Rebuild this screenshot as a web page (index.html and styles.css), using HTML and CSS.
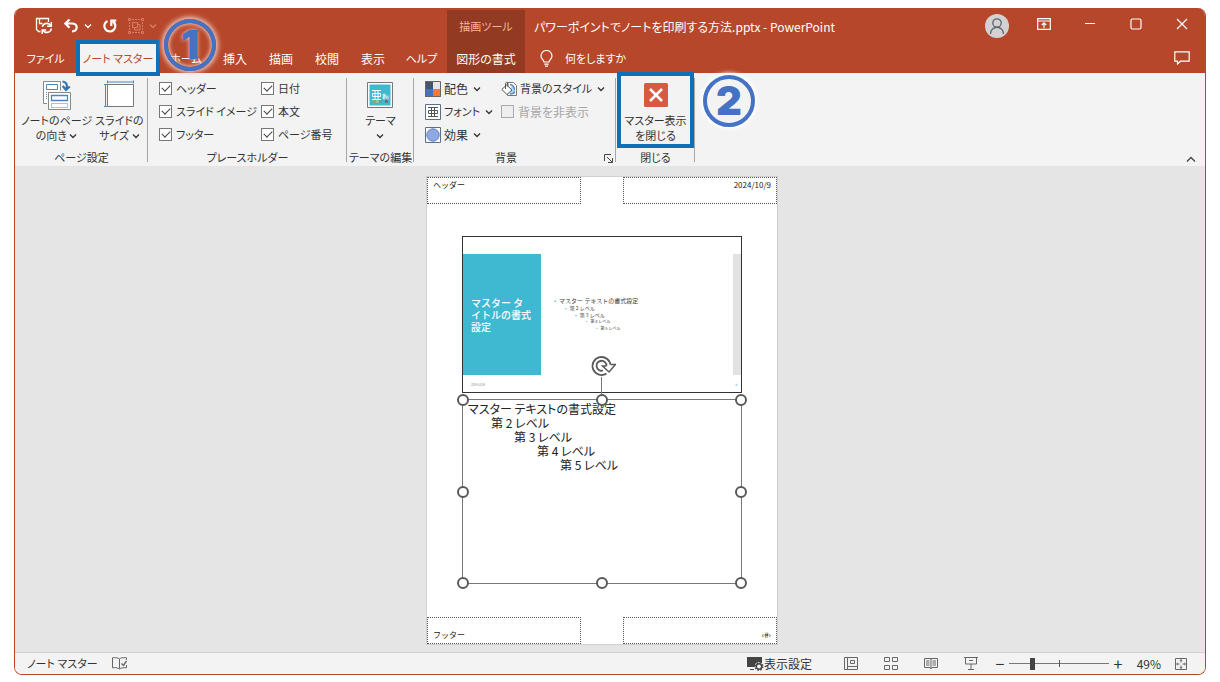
FILE: index.html
```html
<!DOCTYPE html>
<html lang="ja">
<head>
<meta charset="utf-8">
<title>パワーポイントでノートを印刷する方法.pptx - PowerPoint</title>
<link rel="stylesheet" href="styles.css">
</head>
<body>
<svg class="defs" width="0" height="0" aria-hidden="true">
  <symbol id="chev" viewBox="0 0 8 6"><path d="M1 1.5 4 4.5 7 1.5" fill="none" stroke="currentColor" stroke-width="1.3"/></symbol>
</svg>
<div class="window">
  <header class="titlebar">
    <div class="quick">
      <button class="icon-btn" aria-label="保存">
        <svg width="18" height="18" viewBox="0 0 18 18" fill="none" stroke="currentColor" stroke-width="1.3"><path d="M5.500 14.500H3.500L1.500 12.500V1.500h12v3.500M4.500 1.500v5h3"/><path d="M7.400 9.800a4.500 4.500 0 0 1 8.400-1M16.300 11.500a4.500 4.500 0 0 1-8.400 1.600" stroke-width="1.700"/><path d="M16.300 5v4.200h-4.200M7.200 17v-4h4" stroke-width="1.500"/></svg>
      </button>
      <button class="icon-btn" aria-label="元に戻す">
        <svg width="16" height="16" viewBox="0 0 16 16" fill="none" stroke="currentColor" stroke-width="2.200"><path d="M2.500 5.500h6.500c6 0 6.500 7.500 0 8M6.500 1.500 2.300 5.500l4.200 4.200"/></svg>
        <svg class="chev" width="8" height="6"><use href="#chev"/></svg>
      </button>
      <button class="icon-btn" aria-label="やり直し">
        <svg width="16" height="16" viewBox="0 0 16 16" fill="none" stroke="currentColor" stroke-width="2.200"><path d="M5.500 3A5.500 5.500 0 1 0 11 3.500M9.300 8V2.500h5"/></svg>
      </button>
      <button class="icon-btn dim" aria-label="グループ化" disabled>
        <svg width="16" height="16" viewBox="0 0 16 16" fill="none" stroke="currentColor"><path d="M.5.5h2v2h-2zM13.500.5h2v2h-2zM.5 13.500h2v2h-2zM13.500 13.500h2v2h-2z"/><path d="M4 1.500h8M14.500 4v8M4 14.500h8M1.500 4v8" stroke-dasharray="2 1"/><path d="M4.500 4.500h5v5h-5zM9.500 6.500h2.500v5.500H6.500V9.500"/></svg>
        <svg class="chev" width="8" height="6"><use href="#chev"/></svg>
      </button>
    </div>
    <div class="context-title kana">描画ツール</div>
    <h1 class="doc-title">パワーポイントでノートを印刷する方法.pptx - PowerPoint</h1>
    <button class="avatar" aria-label="アカウント">
      <svg width="24" height="24" viewBox="0 0 24 24" fill="none" stroke="#5f6670" stroke-width="1.300"><circle cx="12" cy="9" r="4.200"/><path d="M5.500 20c0-9 13-9 13 0"/></svg>
    </button>
    <button class="win-btn" aria-label="リボンの表示オプション"><svg width="14" height="12" viewBox="0 0 14 12" fill="none" stroke="currentColor" stroke-width="1.200"><path d="M.7.7h12.600v10.600H.7zM.7 3h12.600M7 10V5M4.700 7 7 4.800 9.300 7"/></svg></button>
    <button class="win-btn" aria-label="最小化"><svg width="12" height="12" viewBox="0 0 12 12"><path d="M1 5.500h10" stroke="currentColor"/></svg></button>
    <button class="win-btn" aria-label="最大化"><svg width="12" height="12" viewBox="0 0 12 12"><rect x="1" y="1" width="10" height="10" rx="1.500" fill="none" stroke="currentColor" stroke-width="1.200"/></svg></button>
    <button class="win-btn" aria-label="閉じる"><svg width="12" height="12" viewBox="0 0 12 12"><path d="m1 1 10 10M11 1 1 11" stroke="currentColor" stroke-width="1.200"/></svg></button>
  </header>

  <nav class="tabs">
    <button class="tab kana">ファイル</button>
    <button class="tab kana active">ノート マスター</button>
    <button class="tab kana home">ホーム<span class="badge badge-one">1</span></button>
    <button class="tab">挿入</button>
    <button class="tab">描画</button>
    <button class="tab">校閲</button>
    <button class="tab">表示</button>
    <button class="tab kana">ヘルプ</button>
    <button class="tab context">図形の書式</button>
    <button class="tab kana tellme">
      <svg width="13" height="17" viewBox="0 0 13 17" fill="none" stroke="currentColor" stroke-width="1.200"><path d="M4 12c0-2-3-3-3-6a5.500 5.500 0 0 1 11 0c0 3-3 4-3 6zM4.300 14.200h4.400M5 16.200h3"/></svg>
      何をしますか
    </button>
    <button class="win-btn comment" aria-label="コメント"><svg width="16" height="14" viewBox="0 0 16 14" fill="none" stroke="currentColor" stroke-width="1.200"><path d="M.8.8h14.400v9.400H6.500L3.500 13v-2.800H.8z"/></svg></button>
  </nav>

  <section class="ribbon">
    <div class="group">
      <div class="content page-setup">
        <button class="tall kana">
          <svg width="30" height="30" viewBox="0 0 30 30" fill="none"><path d="M5 23.500H1.500v-22h17v9" fill="#fff" stroke="#888"/><path d="M4.500 4.500h11v5h-11z" stroke="#4a86c5"/><path d="M4.500 12v8" stroke="#4a86c5" stroke-dasharray="1 1"/><path d="M6.500 12.500h22v17h-22z" fill="#fff" stroke="#888"/><path d="M9.500 15.500h16v5h-16z" stroke="#4a86c5" stroke-width="1.300"/><path d="M9.500 23.500h16v4h-16z" stroke="#4a86c5" stroke-dasharray="1 1"/><path d="M20.500 1.500c4 .5 5 3 4 7.500M20.700 6l3.300 4 3.800-3.500" stroke="#2f74b5" stroke-width="2.200"/></svg>
          <span>ノートのページ<br>の向き <svg class="chev" width="8" height="6"><use href="#chev"/></svg></span>
        </button>
        <button class="tall kana">
          <svg width="30" height="30" viewBox="0 0 30 30" fill="none"><path d="M3.500 4.500h26v22h-26z" fill="#fff" stroke="#777"/><path d="M3 2h27M3.500.5v3M29.500.5v3M1.500 4v23M0 4.500h3M0 26.500h3" stroke="#4a86c5"/></svg>
          <span>スライドの<br>サイズ <svg class="chev" width="8" height="6"><use href="#chev"/></svg></span>
        </button>
      </div>
      <h2>ページ設定</h2>
    </div>

    <div class="group">
      <div class="content checks">
        <label><input type="checkbox" checked>ヘッダー</label>
        <label><input type="checkbox" checked>日付</label>
        <label><input type="checkbox" checked>スライド イメージ</label>
        <label><input type="checkbox" checked>本文</label>
        <label><input type="checkbox" checked>フッター</label>
        <label><input type="checkbox" checked>ページ番号</label>
      </div>
      <h2>プレースホルダー</h2>
    </div>

    <div class="group">
      <div class="content center">
        <button class="tall kana">
          <svg width="26" height="30" viewBox="0 0 26 30" fill="none"><path d="M.5 2.500h25v25H.5z" fill="#fff" stroke="#777"/><path d="M2.500 4.500h21v21h-21z" fill="#3fb8d0"/><path d="M5 10.500h9M5 19.500h9M8 10.500v9M11 10.500v9M5.500 13.500h8v3h-8z" stroke="#fff"/><path d="M15.500 15h4M17 13.500v6M19 16c-1 3-4 3-3 1s5-1 3 2M21 15.500v4" stroke="#fff" stroke-width=".8"/><path d="M6 20.500h3v2H6z" fill="#e08a3c"/><path d="M9 20.500h3v2H9z" fill="#e6b93f"/><path d="M12 20.500h3v2h-3z" fill="#6fa84e"/><path d="M18 20.500h3v2h-3z" fill="#c23a58"/></svg>
          <span>テーマ<br><svg class="chev" width="8" height="6"><use href="#chev"/></svg></span>
        </button>
      </div>
      <h2>テーマの編集</h2>
    </div>

    <div class="group">
      <div class="content background">
        <div class="stack">
          <button class="small"><svg width="16" height="16" viewBox="0 0 16 16"><path d="M0 0h8v8H0z" fill="#44546a"/><path d="M8 0h8v8H8z" fill="#e7e6e6"/><path d="M0 8h8v8H0z" fill="#4472c4"/><path d="M8 8h8v8H8z" fill="#ed7d31"/><path d="M.5.5h15v15H.5z" fill="none" stroke="#666"/></svg>配色<svg class="chev" width="8" height="6"><use href="#chev"/></svg></button>
          <button class="small kana"><svg width="16" height="16" viewBox="0 0 16 16" fill="none"><path d="M.5.5h15v15H.5z" fill="#fff" stroke="#5a6f8c"/><path d="M3 3.500h10M3 12.500h10M6.500 3.500v9M9.500 3.500v9M3.500 6.500h9v3h-9z" stroke="#555"/></svg>フォント<svg class="chev" width="8" height="6"><use href="#chev"/></svg></button>
          <button class="small"><svg width="16" height="16" viewBox="0 0 16 16"><path d="M.5.5h15v15H.5z" fill="#fff" stroke="#5a6f8c"/><circle cx="8" cy="8" r="6.200" fill="#8faae3" stroke="#5f7fc4"/></svg>効果<svg class="chev" width="8" height="6"><use href="#chev"/></svg></button>
        </div>
        <div class="stack">
          <button class="small kana"><svg width="16" height="16" viewBox="0 0 16 16" fill="none"><path d="M6.500 1.500h6l3 3v10h-9z" fill="#fff" stroke="#777"/><path d="M8 13h6V8.500L11 3.500z" fill="#b9d3ec"/><path d="M9 3.500c3 .5 4.500 3 4.500 5.500M9 13c2.500 0 4.500-1 4.500-3" stroke="#4a86c5" stroke-width="1.300"/><path d="m5.500 4 5.500 5-5 4.500L.8 8.500z" fill="#fff" stroke="#555"/><path d="M4.500 8V3c0-2.200 2.500-2.200 2.500 0v2.500" stroke="#555"/></svg>背景のスタイル<svg class="chev" width="8" height="6"><use href="#chev"/></svg></button>
          <label class="disabled"><input type="checkbox" disabled>背景を非表示</label>
        </div>
      </div>
      <h2 class="with-launcher">背景</h2>
      <button class="launcher" aria-label="背景の書式設定"><svg width="9" height="9" viewBox="0 0 9 9" fill="none" stroke="#444"><path d="M.5 7V.5H7M3 3l5 5M8.500 4v4.500H4"/></svg></button>
    </div>

    <div class="group">
      <div class="content center">
        <button class="tall kana close-master">
          <svg width="24" height="24" viewBox="0 0 24 24"><rect width="24" height="24" rx="1.500" fill="#d65b40"/><path d="m6 6 12 12M18 6 6 18" stroke="#fff" stroke-width="2.600"/></svg>
          <span>マスター表示<br>を閉じる</span>
        </button>
      </div>
      <h2>閉じる</h2>
      <span class="badge badge-two">2</span>
    </div>
    <button class="collapse" aria-label="リボンを折りたたむ"><svg width="10" height="7" viewBox="0 0 10 7"><path d="M1 5.500 5 1.500l4 4" fill="none" stroke="#444" stroke-width="1.300"/></svg></button>
  </section>

  <main class="canvas">
    <article class="page">
      <div class="edge-row">
        <div class="holder">ヘッダー</div>
        <div class="holder right">2024/10/9</div>
      </div>
      <div class="slide">
        <div class="slide-main">
          <h3>マスター タ<br>イトルの書式<br>設定</h3>
          <ul class="outline">
            <li>マスター テキストの書式設定</li>
            <li>第 2 レベル</li>
            <li>第 3 レベル</li>
            <li>第 4 レベル</li>
            <li>第 5 レベル</li>
          </ul>
          <div class="strip"></div>
        </div>
        <div class="slide-foot"><span>2024/10/9</span><span class="num">‹#›</span></div>
      </div>
      <div class="notes">
        <p>マスター テキストの書式設定</p>
        <p>第 2 レベル</p>
        <p>第 3 レベル</p>
        <p>第 4 レベル</p>
        <p>第 5 レベル</p>
        <svg class="rotate" width="28" height="46" viewBox="0 0 28 46" fill="none"><path d="M13.500 22v24" stroke="#777"/><circle cx="14" cy="12" r="8" stroke="#fff" stroke-width="6"/><path d="M22.500 12A9 9 0 1 0 18.500 19.500M18.500 12A5 5 0 1 0 15 16.500" stroke="#595959" stroke-width="1.800"/><path d="M22.500 10.500h5L21 18l-6.500-6h4" fill="#fff" stroke="#595959" stroke-width="1.500"/></svg>
        <i class="handle tl"></i><i class="handle tc"></i><i class="handle tr"></i>
        <i class="handle ml"></i><i class="handle mr"></i>
        <i class="handle bl"></i><i class="handle bc"></i><i class="handle br"></i>
      </div>
      <div class="edge-row foot">
        <div class="holder">フッター</div>
        <div class="holder right">‹#›</div>
      </div>
    </article>
  </main>

  <footer class="status">
    <span class="kana">ノート マスター</span>
    <button class="proof" aria-label="校正"><svg width="15" height="13" viewBox="0 0 15 13" fill="none" stroke="#666"><path d="M7.500 2v9.500M7.500 2C6 .5 3 .5.5.8v10c2.500-.3 5-.3 7 1.200 1.500-1.200 4-1.500 7-1.200V8M7.500 2c1-1.200 3-1.500 7-1.200v2"/><path d="m9.500 6.500 2 2 3-4.500" stroke-width="1.400"/></svg></button>
    <button class="display"><svg width="17" height="15" viewBox="0 0 17 15"><path d="M0 1h15v6.500A4 4 0 0 0 8 11H0z" fill="#444"/><path d="M3 13.500h4" stroke="#444"/><circle cx="12" cy="10.500" r="2.700" fill="#f3f3f3" stroke="#444" stroke-width="1.500"/><circle cx="12" cy="10.500" r="3.800" fill="none" stroke="#444" stroke-width="1.300" stroke-dasharray="1.500 1.500"/></svg>表示設定</button>
    <button class="view" aria-label="標準"><svg width="14" height="13" viewBox="0 0 14 13" fill="none" stroke="#666"><path d="M.5.5h13v12H.5zM3.500.5v12M3.500 9.500h10M6.500 3.500h4v3h-4z"/></svg></button>
    <button class="view" aria-label="スライド一覧"><svg width="14" height="13" viewBox="0 0 14 13" fill="none" stroke="#666"><path d="M.5.500h5v4h-5zM8.500.5h5v4h-5zM.5 8.500h5v4h-5zM8.500 8.500h5v4h-5z"/></svg></button>
    <button class="view" aria-label="閲覧表示"><svg width="14" height="13" viewBox="0 0 14 13" fill="none" stroke="#666"><path d="M7 1.500v10.500M7 1.500H.5v9H6l1 1 1-1h5.500v-9zM2 4h3.500M2 6h3.500M2 8h3.500M8.500 4H12M8.500 6H12M8.500 8H12"/></svg></button>
    <button class="view" aria-label="スライドショー"><svg width="14" height="13" viewBox="0 0 14 13" fill="none" stroke="#666"><path d="M0 .5h14M1.500.5v6.500h11V.5M5 3.500h4M7 7v5M4 12.500h6"/></svg></button>
    <button class="zoom-btn" aria-label="縮小">−</button>
    <input class="zoom" type="range" min="0" max="100" value="22" aria-label="ズーム">
    <button class="zoom-btn" aria-label="拡大">+</button>
    <span class="percent">49%</span>
    <button class="fit" aria-label="ウィンドウに合わせる"><svg width="12" height="12" viewBox="0 0 12 12" fill="none" stroke="#666"><path d="M.5.5h11v11H.5zM6 1.500v3M6 7.500v3M1.500 6h3M7.500 6h3"/><path d="m4.800 3 1.200-1.500L7.200 3M4.800 9 6 10.500 7.200 9M3 4.800 1.500 6 3 7.200M9 4.800 10.500 6 9 7.200" stroke-width=".8"/></svg></button>
  </footer>
</div>
</body>
</html>
```
FILE: styles.css
```css
* { box-sizing: border-box; }

body {
  margin: 0;
  padding: 8px 14px;
  min-height: 100vh;
  display: flex;
  background: #fff;
  color: #333;
  font: 12px/15px "Noto Sans CJK JP", "Noto Sans", sans-serif;
  font-feature-settings: "palt";
}

.defs { position: absolute; }

button {
  display: flex;
  align-items: center;
  justify-content: center;
  margin: 0;
  padding: 0;
  border: 0;
  background: none;
  color: inherit;
  font: inherit;
  font-feature-settings: inherit;
  white-space: nowrap;
}

h1, h2, h3, p, ul { margin: 0; padding: 0; font-size: inherit; font-weight: 400; }

svg { flex: none; }

.kana { font-size: 11px; }

.window {
  flex: 1;
  display: flex;
  flex-direction: column;
  border: 1px solid #b7472a;
  border-top: 0;
  border-radius: 8px;
  overflow: hidden;
}

/* Title bar */
.titlebar {
  display: flex;
  align-items: stretch;
  height: 35px;
  background: #b7472a;
  color: #fff;
}

.quick { flex: 0 0 432px; display: flex; align-items: center; gap: 10px; padding-left: 20px; }
.icon-btn { gap: 5px; }
.dim { color: #d87e66; }
.context-title {
  flex: 0 0 78px;
  display: flex;
  align-items: center;
  justify-content: center;
  background: #933a22;
  color: #f6b5a2;
  border-top: 2px solid #b7472a;
}
.doc-title { flex: 1; padding-left: 9px; line-height: 37px; white-space: nowrap; }
.avatar { align-self: center; width: 24px; height: 24px; margin-right: 12px; border-radius: 50%; background: #d2d2d2; }
.win-btn { width: 46px; height: 32px; }

/* Tabs */
.tabs {
  display: grid;
  grid-template-columns: 61px 84px 52px 46px 46px 46px 46px 51px 78px 116px 1fr;
  height: 30px;
  background: #b7472a;
  color: #fff;
}
.tab { padding-bottom: 2px; }
.tab.active {
  position: relative;
  z-index: 1;
  height: 36px;
  margin-top: -3px;
  padding: 0;
  border: 4px solid #0f70b7;
  background: #f3f3f3;
  color: #b7472a;
}
.tab.home { position: relative; }
.tab.context { background: #933a22; }
.tellme { gap: 12px; }
.comment { justify-self: end; height: 29px; }

.badge {
  position: absolute;
  z-index: 2;
  display: flex;
  align-items: center;
  justify-content: center;
  width: 52px;
  height: 52px;
  border: 4px solid #4472c4;
  border-radius: 50%;
  color: #4472c4;
  font: 900 40px/44px Inter, "Open Sans", sans-serif;
}
.badge-one { top: -24px; left: 4px; box-shadow: 0 0 5px 2px #f3cfc4, inset 0 0 4px 1px #f3cfc4; text-shadow: 0 0 4px #f3cfc4; }
.badge-two { top: 2px; left: 87px; box-shadow: 0 0 4px 2px #fff; }

/* Ribbon */
.ribbon {
  display: grid;
  grid-template-columns: 133px 199px 67px 202px 79px 1fr;
  height: 93px;
  background: #f3f3f3;
}
.group { position: relative; display: flex; flex-direction: column; padding-top: 4px; }
.group::after {
  content: "";
  position: absolute;
  top: 5px;
  right: 0;
  bottom: 4px;
  border-right: 1px solid #a6a6a6;
}
.group h2 { text-align: center; font-size: 11px; line-height: 18px; white-space: nowrap; }
.group .with-launcher { padding-right: 18px; }
.content { height: 71px; display: flex; }
.page-setup { padding-left: 6px; gap: 3px; }
.center { justify-content: center; }
.tall { flex-direction: column; justify-content: flex-start; gap: 3px; padding-top: 3px; text-align: center; }
.tall .chev { vertical-align: 1px; }
.tall.close-master {
  position: relative;
  z-index: 1;
  width: 77px;
  height: 76px;
  margin-top: -5px;
  padding-top: 7px;
  gap: 6px;
  border: 4px solid #0f70b7;
}

.checks { display: grid; grid-template-columns: 102px 1fr; align-content: start; padding-left: 11px; font-size: 11px; }
label { display: flex; align-items: center; gap: 4px; height: 23px; white-space: nowrap; }
input[type="checkbox"] {
  appearance: none;
  flex: none;
  display: grid;
  place-items: center;
  width: 13px;
  height: 13px;
  margin: 0;
  border: 1px solid #777;
  background: #fff;
}
input[type="checkbox"]:checked::after {
  content: "";
  width: 7px;
  height: 4px;
  border: solid #444;
  border-width: 0 0 1px 1px;
  transform: rotate(-45deg) translate(1px, -1px);
}
.disabled { color: #a6a6a6; }
.disabled input[type="checkbox"] { border-color: #aaa; background: #eee; }

.background { padding-left: 11px; gap: 8px; }
.stack { display: flex; flex-direction: column; align-items: flex-start; }
.small { height: 23px; gap: 3px; }
.small .chev { margin-left: 2px; }
.launcher { position: absolute; right: 3px; bottom: 3px; }
.collapse { align-self: end; justify-self: end; margin: 0 9px 3px 0; }

/* Canvas */
.canvas {
  flex: 1;
  display: flex;
  justify-content: center;
  align-items: flex-start;
  padding: 11px 16px 8px 0;
  background: #e5e5e5;
}
.page {
  display: flex;
  flex-direction: column;
  width: 350px;
  background: #fff;
  outline: 1px solid #d0d0d0;
  color: #222;
}
.edge-row { display: flex; justify-content: space-between; }
.holder {
  width: 154px;
  height: 27px;
  padding: 1px 5px;
  border: 1px dotted #555;
  font-size: 8px;
  line-height: 11px;
  font-feature-settings: normal;
}
.holder.right { text-align: right; }
.foot .holder { display: flex; align-items: flex-end; padding-bottom: 3px; }
.foot .right { justify-content: flex-end; }

.slide { width: 280px; height: 157px; margin: 32px 35px 6px; padding-top: 17px; border: 1px solid #333; }
.slide-main { display: flex; height: 121px; }
.slide h3 {
  flex: 0 0 78px;
  display: flex;
  align-items: center;
  padding-left: 8px;
  background: #3fb8d2;
  color: #fff;
  font-size: 10px;
  font-weight: 500;
  line-height: 12px;
  font-feature-settings: normal;
  white-space: nowrap;
}
.outline { flex: 1; padding: 43px 0 0 17px; list-style: none; font-size: 6px; line-height: 7px; color: #444; font-feature-settings: normal; }
.outline li { margin-left: -4px; white-space: nowrap; }
.outline li::before { content: "•"; margin-right: 3px; color: #3fb8d2; }
.outline li:nth-child(n+2) { margin-left: 7px; font-size: 5px; }
.outline li:nth-child(3) { margin-left: 17px; }
.outline li:nth-child(n+4) { margin-left: 28px; font-size: 4px; }
.outline li:nth-child(5) { margin-left: 38px; line-height: 6px; }
.strip { width: 8px; background: #e2e2e2; }
.slide-foot { display: flex; justify-content: space-between; padding: 7px 3px 0 8px; font-size: 3px; line-height: 6px; color: #888; }
.slide-foot .num { color: #3fb8d2; }

.notes {
  position: relative;
  width: 280px;
  height: 185px;
  margin: 0 35px;
  padding: 2px 5px;
  border: 1px solid #777;
  line-height: 14px;
}
.notes p { white-space: nowrap; }
.notes p:nth-of-type(2) { padding-left: 23px; }
.notes p:nth-of-type(3) { padding-left: 46px; }
.notes p:nth-of-type(4) { padding-left: 69px; }
.notes p:nth-of-type(5) { padding-left: 92px; }
.handle { position: absolute; width: 12px; height: 12px; margin: -6px; border: 2px solid #595959; border-radius: 50%; background: #fff; }
.tl, .tc, .tr { top: 0; }
.ml, .mr { top: 50%; }
.bl, .bc, .br { top: 100%; }
.tl, .ml, .bl { left: 0; }
.tc, .bc { left: 50%; }
.tr, .mr, .br { left: 100%; }
.rotate { position: absolute; left: 125px; top: -46px; }
.edge-row.foot { margin-top: 33px; }

/* Status bar */
.status {
  display: flex;
  align-items: center;
  height: 22px;
  padding: 0 18px 0 12px;
  border-top: 1px solid #d0d0d0;
  background: #f3f3f3;
}
.proof { margin-left: 14px; }
.display { margin-left: auto; margin-right: 19px; }
.view { width: 40px; }
.zoom-btn { width: 18px; font-size: 16px; font-feature-settings: normal; }
.zoom {
  appearance: none;
  width: 100px;
  height: 14px;
  margin: 0;
  background:
    linear-gradient(#555, #555) center / 1px 7px no-repeat,
    linear-gradient(#777, #777) center / 100% 1px no-repeat;
}
.zoom::-webkit-slider-thumb { appearance: none; width: 5px; height: 12px; background: #444; }
.percent { width: 34px; margin-right: 14px; text-align: right; }
```
